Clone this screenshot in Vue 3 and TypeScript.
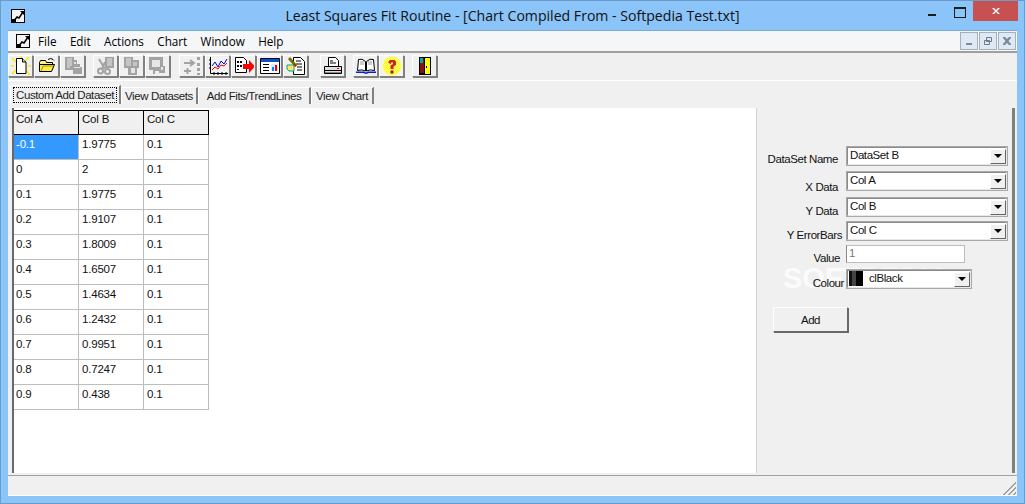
<script setup lang="ts">
const menus = ['File', 'Edit', 'Actions', 'Chart', 'Window', 'Help']
const tabs = [
  { label: 'Custom Add Dataset', width: 111 },
  { label: 'View Datasets', width: 77 },
  { label: 'Add Fits/TrendLines', width: 113 },
  { label: 'View Chart', width: 63 },
]
const rows: string[][] = [
  ['-0.1', '1.9775', '0.1'], ['0', '2', '0.1'], ['0.1', '1.9775', '0.1'], ['0.2', '1.9107', '0.1'],
  ['0.3', '1.8009', '0.1'], ['0.4', '1.6507', '0.1'], ['0.5', '1.4634', '0.1'], ['0.6', '1.2432', '0.1'],
  ['0.7', '0.9951', '0.1'], ['0.8', '0.7247', '0.1'], ['0.9', '0.438', '0.1'],
]
const G = '#a3a3a3'
const L = '#e6e6e6'
const grayDoc = `<path d="M2 1h9v3h3v4h3v3h2v7h-9v-4H2z" fill="${G}"/><path d="M4 3h5M4 5h5M4 7h5M4 9h5M4 11h3" stroke="${L}"/><path d="M11 6h2v2h-2zM11 11h6v1h-6z" fill="${L}"/>`
const toolGroups: { gap: number; tools: string[] }[] = [
  { gap: 0, tools: [
    `<path d="M1 2l4 4M18 1l-4 4M1 18l4-4M19 19l-4-4M0 10h3M17 10h3M10 0v2" stroke="#ffe800" stroke-width="1.500"/><path d="M5.500 2.500h6l3.500 3.500v11.500h-9.500z" fill="#fff" stroke="#000"/><path d="M11.500 2.500v3.500h3.500" fill="#ddd" stroke="#000"/>`,
    `<path d="M2.500 6.500l1-2h5l1 2h6v2h-13z" fill="#fff18c" stroke="#000"/><path d="M2.500 15.500v-7h15l-3 7z" fill="#ffec40" stroke="#000"/><path d="M4 15l2-5h10" fill="none" stroke="#a89600"/><path d="M11 3.500q3-2 5 0l1 1" fill="none" stroke="#000"/>`,
    grayDoc,
  ] },
  { gap: 8, tools: [
    `<path d="M9 1h9v11H9z" fill="${G}"/><path d="M11 3h5M11 5h5M11 7h5M11 9h5" stroke="${L}"/><circle cx="4.500" cy="15" r="2.500" fill="none" stroke="${G}" stroke-width="2"/><circle cx="11.500" cy="15.500" r="2.500" fill="none" stroke="${G}" stroke-width="2"/><path d="M3 3l6 10M9 6l-3 7" stroke="${G}" stroke-width="2"/>`,
    `<path d="M2 1h9v3h6v8h-2v7H6v-7H2z" fill="${G}"/><path d="M4 3h5M4 5h5M4 7h5M4 9h5M11 7h4M11 9h4" stroke="${L}"/><path d="M9 12h4v5H9z" fill="${L}"/>`,
    `<path d="M1 1h14v13H1z" fill="${G}"/><path d="M4 4h8v7H4z" fill="${L}"/><path d="M12 8h3v2h2v7h-6v-2H7v3H5v-5h7z" fill="${G}"/><path d="M13 11h2v3h-2z" fill="${L}"/>`,
  ] },
  { gap: 9, tools: [
    `<path d="M2 7h9M8 4l4 3-4 3M2 15h7M5.500 12v6" stroke="${G}" stroke-width="2" fill="none"/><path d="M15 1h3v3h-3zM15 7h3v3h-3zM15 12h3v3h-3zM15 17h3v2h-3z" fill="${G}"/>`,
    `<path d="M2 1h18v17H2z" fill="#f4f4f4"/><path d="M2.500 1v16.500H20M1 4h2M1 8h2M1 12h2M6 16v3M10 16v3M14 16v3M18 16v3" stroke="#000" fill="none"/><path d="M4 10l3-4 3 5 3-6 3 3 3-5" stroke="#0000e0" fill="none"/><path d="M4 14l3-3 3 2 3-4 3 1 3-3" stroke="#f00" fill="none"/>`,
    `<path d="M1.500 1.500h8l3 3v12h-11z" fill="#fff" stroke="#000"/><path d="M3 5h2v2H3zM6 5h2v2H6zM3 9h2v2H3zM6 9h2v2H6zM3 13h2v1H3z" fill="#000"/><path d="M9 8h6V4l6 6.500-6 6.500v-4H9z" fill="#f00"/>`,
    `<path d="M.500 2.500h19v15H.500z" fill="#fff" stroke="#000"/><path d="M1 3h18v3H1z" fill="#0a50d0"/><path d="M3 8h6v1H3zM3 11h6v1H3zM3 14h6v1H3z" fill="#000"/><path d="M11 8h7v7h-7z" fill="#d8ecff"/><path d="M12 11h2v4h-2z" fill="#08f"/><path d="M15 9h2v6h-2z" fill="#e00"/>`,
    `<path d="M7.500 1.500h7l4 4v13h-11z" fill="#fff" stroke="#000"/><path d="M10 5h5M10 8h6M11 11h5M11 14h5" stroke="#000"/><path d="M1 9h7v6H3l-2-2z" fill="#ffe860" stroke="#00a0a0"/><path d="M4 1l7 8-2 2-7-8z" fill="#707000"/><path d="M8 8l3 1-2 2z" fill="#f00"/>`,
  ] },
  { gap: 12, tools: [
    `<path d="M5.500 1.500h7l3 3v6h-10z" fill="#fff" stroke="#000"/><path d="M7 5h3M7 7h6" stroke="#000"/><path d="M1.500 10.500h17v7h-17z" fill="#e0e0e0" stroke="#000"/><path d="M2 14.500h16" stroke="#000"/><path d="M14 12h2v1h-2z" fill="#f00"/><path d="M2 16h16v1H2z" fill="#888"/>`,
  ] },
  { gap: 8, tools: [
    `<path d="M9.500 5.500Q6 2 2.500 3.500L1.500 14.500Q6 13 9.500 15ZM10.500 5.500Q14 2 17.500 3.500L18.500 14.500Q14 13 10.500 15Z" fill="#fff" stroke="#000"/><path d="M4 6h4M4 8h4M12 6h4M12 8h4" stroke="#999"/><path d="M0 15.500h8l2 1 2-1h8v1.500h-7l-3 1-3-1H0z" fill="#0020d0"/>`,
    `<circle cx="10" cy="10" r="9.500" fill="#ffff00"/><path d="M0 0h20v20H0z" fill="url(#dth)"/><path d="M6.500 7V5.500L8 4h4.500L14 5.500V9l-2.500 1.500v2.500H8.500V9.500L11 8V6.500H9V8z" fill="#d02030"/><path d="M8.500 14.500h3v3h-3z" fill="#a01030"/><defs><pattern id="dth" width="2" height="2" patternUnits="userSpaceOnUse"><path d="M0 0h1v1H0zM1 1h1v1H1z" fill="#fff" fill-opacity=".55"/></pattern></defs>`,
  ] },
  { gap: 8, tools: [
    `<path d="M4 1h12v18H4z" fill="#000"/><path d="M9 2h6v16H9z" fill="#ffff00"/><path d="M5 2h4v15H5z" fill="#8a1010"/><path d="M5 2h3v5H5z" fill="#00a8a8"/><path d="M9 2h1v16H9z" fill="#000"/><path d="M11 10h1v2h-1z" fill="#000"/>`,
  ] },
]
const appIcon = `<path d="M1 1h14v14H1z" fill="#000"/><path d="M2 2h12v12H2z" fill="#f4f4f4"/><path d="M3 14l4-5 2 1 4-6" fill="none" stroke="#000" stroke-width="1.500"/><path d="M10 3h4v4z" fill="#000"/><path d="M2 11h4v3H2z" fill="#000"/>`

const combos = [
  { label: 'DataSet Name', value: 'DataSet B', top: 0, pad: 8, lt: 6 },
  { label: 'X Data', value: 'Col A', top: 5, pad: 8, lt: 9 },
  { label: 'Y Data', value: 'Col B', top: 6, pad: 8, lt: 7 },
  { label: 'Y ErrorBars', value: 'Col C', top: 4, pad: 4, lt: 7 },
]
</script>

<template>
  <div class="window">
    <header class="titlebar">
      <svg class="app-icon" width="16" height="16" viewBox="0 0 16 16" v-html="appIcon"></svg>
      <div class="title">Least Squares Fit Routine - [Chart Compiled From - Softpedia Test.txt]</div>
      <div class="caption">
        <span class="cap-min"></span>
        <span class="cap-max"></span>
        <span class="cap-close">
          <svg width="10" height="10" viewBox="0 0 10 10"><path d="M1 2l3 3-3 3h2l2-2 2 2h2L6 5l3-3H7L5 4 3 2z" fill="#fff"/></svg>
        </span>
      </div>
    </header>

    <div class="client">
      <nav class="menubar">
        <svg class="menu-icon" width="16" height="16" viewBox="0 0 16 16" v-html="appIcon"></svg>
        <span v-for="m in menus" :key="m" class="menu-item">{{ m }}</span>
        <div class="mdi-btns">
          <span class="mdi"><svg width="10" height="10" viewBox="0 0 10 10"><path d="M2 7h6v2H2z" fill="#7a8a98"/></svg></span>
          <span class="mdi"><svg width="10" height="10" viewBox="0 0 10 10"><path d="M3.500 1.500h5v4h-5zM1.500 4.500h5v4h-5z" fill="#dfe9f5" stroke="#6a7a88"/></svg></span>
          <span class="mdi"><svg width="10" height="10" viewBox="0 0 10 10"><path d="M1 1h2l2 2 2-2h2v1L6.500 5 9 8v1H7L5 7 3 9H1V8l2.500-3L1 2z" fill="#7a8a98"/></svg></span>
        </div>
      </nav>

      <div class="toolbar">
        <div v-for="(group, gi) in toolGroups" :key="gi" class="tool-group" :style="{ marginLeft: group.gap + 'px' }">
          <button v-for="(tool, ti) in group.tools" :key="ti" class="tool" type="button">
            <svg width="20" height="20" viewBox="0 0 20 20" v-html="tool"></svg>
          </button>
        </div>
      </div>

      <div class="tabs">
        <div v-for="(t, i) in tabs" :key="t.label" class="tab" :class="{ active: i === 0 }" :style="{ width: t.width + 'px' }"><span>{{ t.label }}</span></div>
      </div>

      <main class="page">
        <section class="sheet">
          <div class="grid">
            <div v-for="h in ['Col A', 'Col B', 'Col C']" :key="h" class="cell head">{{ h }}</div>
            <template v-for="(r, ri) in rows" :key="ri">
              <div v-for="(c, ci) in r" :key="ci" class="cell" :class="{ selected: ri === 0 && ci === 0 }">{{ c }}</div>
            </template>
          </div>
        </section>
        <aside class="panel">
          <div class="watermark">SOFTPEDIA</div>
          <div v-for="c in combos" :key="c.label" class="row" :style="{ marginTop: c.top + 'px' }">
            <label class="lbl" :style="{ paddingRight: c.pad + 'px', paddingTop: c.lt + 'px' }">{{ c.label }}</label>
            <div class="combo wide">
              <span class="val">{{ c.value }}</span>
              <span class="drop"><i></i></span>
            </div>
          </div>
          <div class="row value-row">
            <label class="lbl lbl-value">Value</label>
            <div class="edit">1</div>
          </div>
          <div class="row colour-row">
            <label class="lbl lbl-colour">Colour</label>
            <div class="combo narrow">
              <span class="swatch"></span>
              <span class="val colour-val">clBlack</span>
              <span class="drop"><i></i></span>
            </div>
          </div>
          <button class="add" type="button">Add</button>
        </aside>
      </main>

      <footer class="statusbar">
        <svg class="grip" width="14" height="14" viewBox="0 0 14 14"><path d="M1 14L14 1M2 14L14 2M6 14l8-8M7 14l7-7M11 14l3-3M12 14l2-2" stroke="#a0a0a0" fill="none"/></svg>
      </footer>
    </div>
  </div>
</template>

<style>
html, body { margin: 0; padding: 0; overflow: hidden; background: #8bc4f8; }
</style>

<style scoped>
.window {
  width: 1025px; height: 504px; box-sizing: border-box;
  background: #8bc4f8; border: 1px solid #6b9cc9;
  display: flex; flex-direction: column;
  font-family: "Liberation Sans", Arial, sans-serif; font-size: 11.500px; letter-spacing: -.42px; color: #000;
}
.titlebar { height: 29px; display: flex; align-items: flex-start; flex: none; }
.app-icon { margin: 7px 0 0 9px; flex: none; }
.title {
  flex: 1; text-align: center; font-family: "Open Sans", sans-serif; font-size: 14.100px; letter-spacing: 0;
  line-height: 29px; color: #111; padding-left: 71px;
}
.caption { display: flex; align-items: flex-start; flex: none; margin-right: 6px; }
.cap-min { width: 8px; height: 2px; background: #1c1c1c; margin: 13px 18px 0 0; }
.cap-max { width: 10px; height: 8px; border: 1px solid #1c1c1c; border-top-width: 2px; margin: 6px 7px 0 0; box-sizing: content-box; }
.cap-close { width: 45px; height: 20px; background: #c75050; display: flex; align-items: center; justify-content: center; }

.client {
  flex: 1; margin: 0 7px 7px 7px; background: #f0f0f0; display: flex; flex-direction: column; min-height: 0;
  border-bottom: 1px solid #fff;
}
.menubar {
  height: 20px; flex: none; display: flex; align-items: center; background: #f5f6f7;
  border-top: 1px solid #7ea9d3; border-bottom: 2px solid #a0a0a0; box-sizing: content-box;
}
.menu-icon { margin-left: 7px; flex: none; }
.menu-item { font-family: "Open Sans", sans-serif; font-size: 11.700px; letter-spacing: 0; padding: 0 6.700px; color: #000; }
.menu-item:first-of-type { padding-left: 7px; }
.mdi-btns { margin-left: auto; display: flex; gap: 1px; margin-right: 1px; }
.mdi { width: 16px; height: 16px; border: 1px solid #a5b0ba; background: #dfe9f5; display: flex; align-items: center; justify-content: center; }

.toolbar { height: 28px; flex: none; display: flex; padding: 2px 0 0 0; box-sizing: border-box; border-bottom: 1px solid #fff; }
.tool-group { display: flex; gap: 1px; }
.tool {
  width: 25px; height: 22px; padding: 0; background: #f0f0f0; display: flex; align-items: center; justify-content: center;
  border: 1px solid; border-color: #fff #808080 #808080 #fff; box-shadow: 1px 1px 0 #808080;
}

.tabs { height: 27px; flex: none; display: flex; align-items: flex-end; padding: 0 0 4px 2px; box-sizing: border-box; }
.tab {
  height: 17px; box-sizing: border-box; padding-top: 1px; background: #f0f0f0; text-align: center; flex: none; white-space: nowrap;
  border-left: 1px solid #fff; border-top: 1px solid #fff; border-right: 2px solid #808080;
  line-height: 14px; color: #222;
}
.tab.active { height: 19px; padding: 1px 2px 0 2px; }
.tab.active span { display: block; border: 1px dotted #000; height: 16px; line-height: 14px; box-sizing: border-box; }

.page { flex: 1; min-height: 0; display: flex; padding: 0 0 2px 4px; border-bottom: 1px solid #a0a0a0; position: relative; }
.sheet { width: 744px; flex: none; background: #fff; border-left: 2px solid #696969; box-sizing: border-box; padding: 2px 0 0 0; }
.grid { display: grid; grid-template-columns: 65px 65px 65px; grid-auto-rows: 25px; width: 195px; }
.cell {
  border-right: 1px solid #bdbdbd; border-bottom: 1px solid #bdbdbd; box-sizing: border-box; letter-spacing: -.2px;
  padding: 2px 0 0 2px; line-height: 15px; color: #111; background: #fff;
}
.cell:not(:nth-child(3n + 1)) { padding-left: 3px; }
.cell.head { background: #f0f0f0; border-top: 1px solid #000; border-right: 1.500px solid #000; border-bottom: 1.500px solid #000; padding-top: 1px; }
.cell.selected { background: #3399ff; color: #fff; }

.panel {
  flex: 1; min-width: 0; background: #f0f0f0; position: relative; padding: 38px 0 0 0; box-sizing: border-box;
  border-left: 1px solid #d0d0d0; border-right: 3px solid #808080; margin-right: 2px;
}
.row { display: flex; align-items: flex-start; width: 255px; height: 20px; position: relative; z-index: 1; }
.lbl { width: 89px; height: 20px; flex: none; box-sizing: border-box; text-align: right; line-height: 14px; white-space: nowrap; color: #111; }
.combo {
  height: 20px; box-sizing: border-box; background: #fff; display: flex; align-items: center; flex: none;
  border: 2px solid; border-color: #8a8a8a #e8e8e8 #e8e8e8 #8a8a8a; outline: 1px solid #a8a8a8; outline-offset: -1px;
}
.wide { width: 162px; }
.narrow { width: 126px; }
.val { padding-left: 2px; flex: 1; line-height: 14px; margin-top: -2px; color: #111; }
.drop {
  width: 16px; height: 15px; flex: none; background: #f0f0f0; display: flex; align-items: center; justify-content: center;
  border: 1px solid; border-color: #fff #666 #666 #fff; box-sizing: border-box;
}
.drop i { width: 0; height: 0; border-left: 4px solid transparent; border-right: 4px solid transparent; border-top: 4px solid #000; }
.value-row { margin-top: 4px; }
.lbl-value { padding-right: 6px; padding-top: 6px; }
.edit {
  width: 119px; height: 18px; box-sizing: border-box; background: #fff; color: #777; padding-left: 2px; line-height: 14px;
  border: 1px solid #bdbdbd; border-left-color: #8a8a8a;
}
.colour-row { margin-top: 4px; }
.lbl-colour { padding-right: 2px; padding-top: 7px; }
.swatch { width: 14px; height: 15px; margin-left: 1px; flex: none; background: linear-gradient(90deg, #111 0 3px, #444 3px 7px, #000 7px); margin-top: -1px; }
.colour-val { padding-left: 6px; }
.add {
  display: block; position: relative; z-index: 1; margin: 18px 0 0 16px; width: 75px; height: 25px; background: #f0f0f0; font-family: inherit; font-size: inherit; letter-spacing: inherit; padding: 0; color: #111;
  border: 1px solid; border-color: #fff #696969 #696969 #fff; box-shadow: 1px 1px 0 #696969;
}
.watermark {
  position: absolute; left: 26px; top: 154px; font-weight: 700; font-size: 29px; line-height: 32px; letter-spacing: 0;
  color: rgba(255, 255, 255, .75); pointer-events: none;
}
.statusbar { height: 19px; flex: none; display: flex; justify-content: flex-end; align-items: flex-end; }
.grip { flex: none; margin-right: 1px; }
</style>
